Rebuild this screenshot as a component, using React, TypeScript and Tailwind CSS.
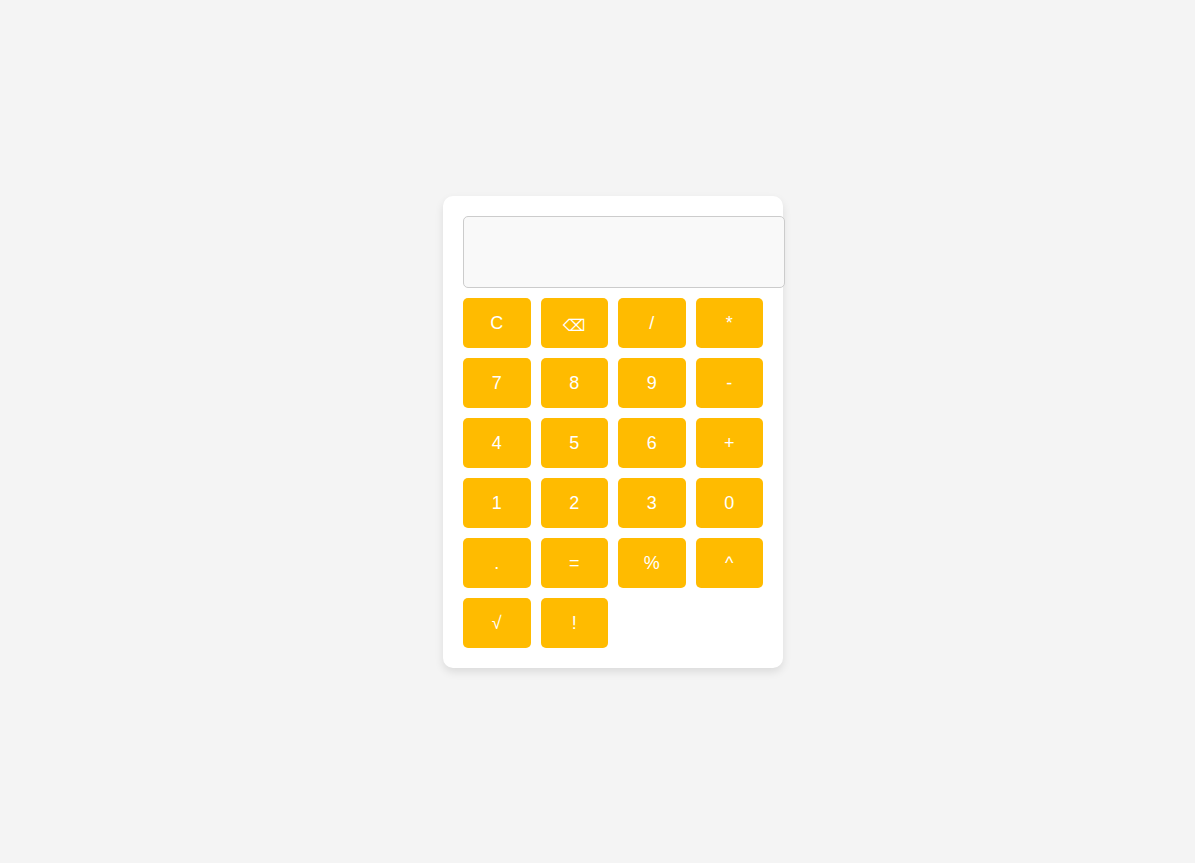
import React, { FC, useState } from "react";

const KEYS = [
  "C", "⌫", "/", "*",
  "7", "8", "9", "-",
  "4", "5", "6", "+",
  "1", "2", "3", "0",
  ".", "=", "%", "^",
  "√", "!",
];

const App: FC = () => {
  const [display, setDisplay] = useState("");

  const _press = (k: string) => {
    if (k === "C") return setDisplay("");
    if (k === "⌫") return setDisplay((d) => d.slice(0, -1));
    if (k === "=") {
      try {
        // eslint-disable-next-line no-new-func
        setDisplay(String(Function(`return (${display.replace(/\^/g, "**")})`)()));
      } catch {
        setDisplay("Error");
      }
      return;
    }
    setDisplay((d) => d + k);
  };

  return (
    <div className="min-h-[863px] bg-[#f4f4f4] flex items-center justify-center pl-[31px] font-['Liberation_Sans',Arial,sans-serif]">
      <div className="w-[340px] bg-white rounded-[10px] p-5 shadow-[0_4px_8px_rgba(0,0,0,0.1)]">
        <input
          type="text"
          readOnly
          value={display}
          className="block w-[322px] h-[72px] mb-[10px] px-[10px] text-right text-2xl bg-[#f9f9f9] border border-[#ccc] rounded-[5px] outline-none"
        />
        <div className="grid grid-cols-4 gap-[10px]">
          {KEYS.map((k) => (
            <button
              key={k}
              onClick={() => _press(k)}
              className="h-[50px] bg-[#ffbb00] text-white text-lg rounded-[5px] cursor-pointer"
            >
              {k === "⌫" ? (
                <span className="font-['DejaVu_Sans',sans-serif] text-base relative top-[2px]">
                  {k}
                </span>
              ) : (
                k
              )}
            </button>
          ))}
        </div>
      </div>
    </div>
  );
};

export default App;
